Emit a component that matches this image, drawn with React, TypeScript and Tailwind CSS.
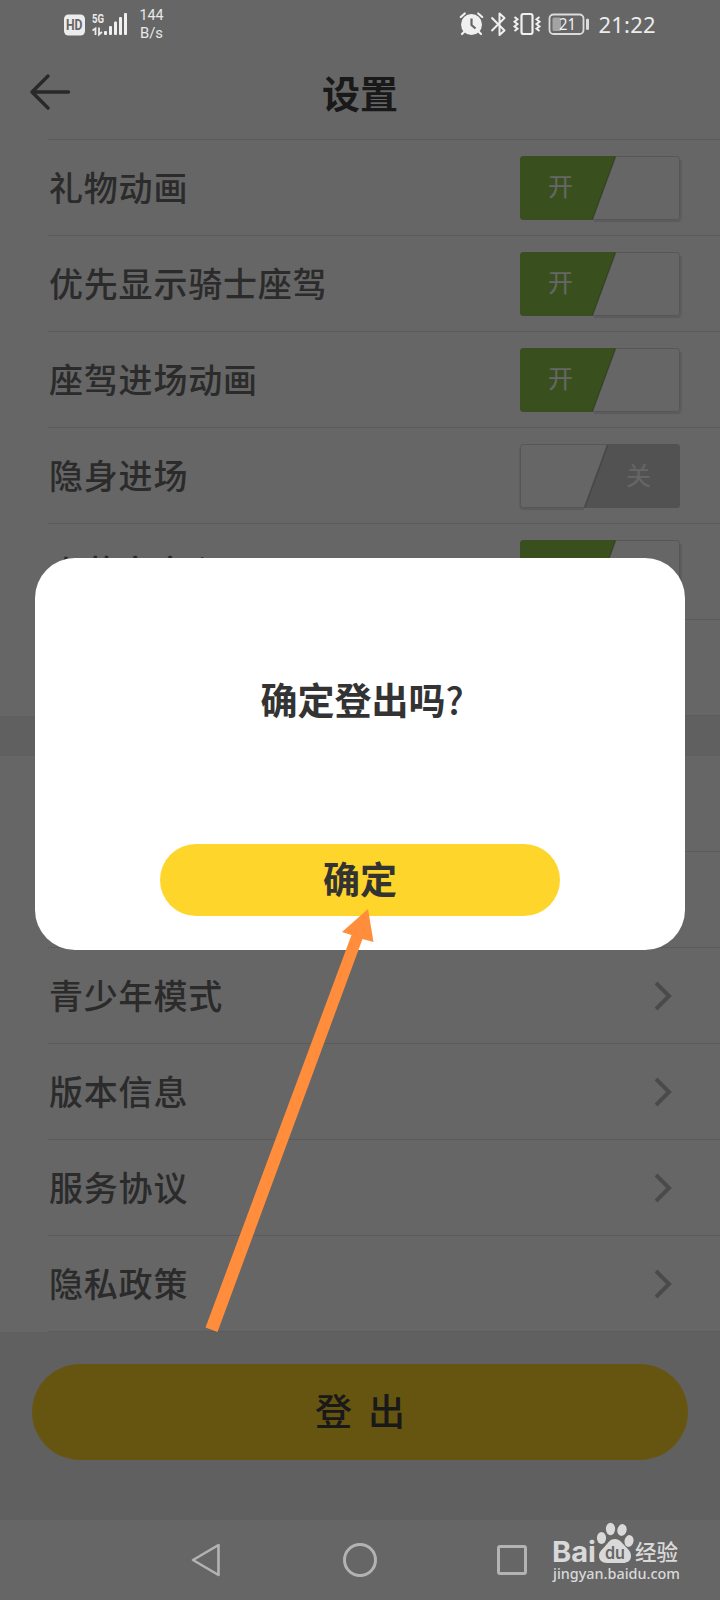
import React, { useState } from 'react';

interface ToggleItem {
  label: string;
  on: boolean;
}

const toggleItems: ToggleItem[] = [
  { label: '礼物动画', on: true },
  { label: '优先显示骑士座驾', on: true },
  { label: '座驾进场动画', on: true },
  { label: '隐身进场', on: false },
  { label: '火花文字心', on: true },
];

const linkItems = ['青少年模式', '版本信息', '服务协议', '隐私政策'];

function StatusBar() {
  return (
    <div className="relative z-20 h-12">
      <svg width="720" height="48" viewBox="0 0 720 48" fill="none" className="block">
        {/* HD + signal */}
        <rect x="64" y="14.5" width="21" height="21" rx="4.5" fill="#ececec" />
        <text x="66" y="30" textLength="16.5" lengthAdjust="spacingAndGlyphs" fontSize="14" fontWeight="700" fill="#666" fontFamily="Roboto, sans-serif">HD</text>
        <text x="92" y="23" textLength="12" lengthAdjust="spacingAndGlyphs" fontSize="13" fontWeight="700" fill="#ececec" fontFamily="Roboto, sans-serif">5G</text>
        <path d="M92.500 30.500l3-2V35M99 27.500V34.500l3-2.500" stroke="#ececec" strokeWidth="1.800" />
        <g fill="#f0f0f0">
          <rect x="104" y="31" width="3" height="4" rx="1" />
          <rect x="109" y="26" width="3" height="9" rx="1" />
          <rect x="114" y="21.500" width="3" height="13.500" rx="1" />
          <rect x="119" y="17" width="3" height="18" rx="1" />
          <rect x="124" y="13" width="3" height="22" rx="1" />
        </g>
        <text x="139.500" y="20" textLength="24" lengthAdjust="spacingAndGlyphs" fontSize="15" fill="#e8e8e8" fontFamily="Roboto, sans-serif">144</text>
        <text x="140" y="38" textLength="23" lengthAdjust="spacingAndGlyphs" fontSize="15" fill="#e8e8e8" fontFamily="Roboto, sans-serif">B/s</text>

        {/* alarm */}
        <circle cx="471.500" cy="24.500" r="10.500" fill="#f0f0f0" />
        <path d="M471.500 18.500v6.500l4 3.500" stroke="#666" strokeWidth="2.200" />
        <path d="M460.800 17l4-3.500M482.200 17l-4-3.500M464.500 31.500l-2.500 2.500M478.500 31.500l2.500 2.500" stroke="#f0f0f0" strokeWidth="2.200" strokeLinecap="round" />
        {/* bluetooth */}
        <path d="M491.500 17.500L504.500 30.500L499.500 35V13.500L504.500 18L491.500 31" stroke="#f0f0f0" strokeWidth="2" strokeLinejoin="round" />
        {/* vibrate */}
        <rect x="521.500" y="14" width="11" height="20" rx="2" stroke="#f0f0f0" strokeWidth="2.200" />
        <path d="M514.500 17l3 2.300-3 2.400 3 2.300-3 2.400 3 2.300-3 2.300M539.500 17l-3 2.300 3 2.400-3 2.300 3 2.400-3 2.300 3 2.300" stroke="#f0f0f0" strokeWidth="2" />
        {/* battery */}
        <rect x="549.500" y="14.500" width="34" height="19.500" rx="4" stroke="#dcdcdc" strokeWidth="1.800" />
        <rect x="552.500" y="17.500" width="8.500" height="13.500" rx="1.500" fill="#a3a3a3" />
        <rect x="586" y="18.500" width="3" height="11.500" rx="1.500" fill="#dcdcdc" />
        <text x="559" y="30" textLength="17" lengthAdjust="spacingAndGlyphs" fontSize="16" fill="#f0f0f0" fontFamily="'Noto Sans', sans-serif">21</text>
        <text x="598.500" y="32.500" textLength="57" fontSize="22" fill="#ececec" fontFamily="'Noto Sans', sans-serif">21:22</text>
      </svg>
    </div>
  );
}

function Switch({ on }: { on: boolean }) {
  return (
    <svg width="168" height="72" viewBox="-4 -4 168 72" className="-mr-1 block">
      {on ? (
        <>
          <path d="M74 65H157.500a3 3 0 0 0 3-3V4" stroke="#000" strokeOpacity=".1" strokeWidth="2.500" fill="none" />
          <rect x=".5" y=".5" width="159" height="63" rx="3" fill="#fff" stroke="#d8d8d8" />
          <path d="M3.500 0H96L72.500 64H3.500A3.500 3.500 0 0 1 0 60.500V3.500A3.500 3.500 0 0 1 3.500 0z" fill="#8fc74b" />
          <path d="M95.500 1L72.500 63.500" stroke="#000" strokeOpacity=".18" strokeWidth="1.500" />
          <text x="28" y="40" fontSize="25" fill="#fff" fontFamily="'Noto Sans CJK SC', sans-serif">开</text>
        </>
      ) : (
        <>
          <path d="M.5 4v58a3 3 0 0 0 3 3H64" stroke="#000" strokeOpacity=".1" strokeWidth="2.500" fill="none" />
          <rect x=".5" y=".5" width="159" height="63" rx="3" fill="#fff" stroke="#d8d8d8" />
          <path d="M87.500 0H156.500a3.500 3.500 0 0 1 3.500 3.500V60.500a3.500 3.500 0 0 1-3.500 3.500H64z" fill="#cdcdcd" />
          <path d="M87.500 1L64.500 63.500" stroke="#000" strokeOpacity=".15" strokeWidth="2" />
          <text x="106" y="41" fontSize="25" fill="#fff" fontFamily="'Noto Sans CJK SC', sans-serif">关</text>
        </>
      )}
    </svg>
  );
}

function Row({ label, children }: { label?: string; children?: React.ReactNode }) {
  return (
    <div className="ml-12 flex h-24 items-center justify-between border-b border-[#e6e6e6] pr-10">
      <span className="pb-0.5 pl-px text-[34px] font-medium tracking-[0.8px] text-[#6b6b6b]">{label}</span>
      {children}
    </div>
  );
}

function Chevron() {
  return (
    <svg width="18" height="30" viewBox="0 0 18 30" fill="none" className="mr-2 block">
      <path d="M2 2L15 15L2 28" stroke="#bababa" strokeWidth="4" />
    </svg>
  );
}

function NavBar() {
  return (
    <div className="relative z-20 flex h-20 items-center pl-[190px]">
      <svg width="30" height="36" viewBox="0 0 30 36" fill="none" className="block">
        <path d="M28.500 3V33L3 18z" stroke="#b3b3b3" strokeWidth="2.600" strokeLinejoin="round" />
      </svg>
      <div className="ml-[123px] h-[34px] w-[34px] rounded-full border-[3px] border-[#b3b3b3]" />
      <div className="ml-[120px] h-[30px] w-[30px] rounded-[3px] border-[3px] border-[#b3b3b3]" />
    </div>
  );
}

function Watermark() {
  return (
    <svg width="136" height="68" viewBox="0 0 136 68" className="absolute bottom-3 left-[549px] z-40 overflow-visible">
      <g fill="#d9d9d9">
        <text x="3" y="42" textLength="44" lengthAdjust="spacingAndGlyphs" fontSize="28" fontWeight="700" fontFamily="Inter, sans-serif">Bai</text>
        <ellipse cx="52.500" cy="18" rx="4.600" ry="6" />
        <ellipse cx="61.500" cy="9" rx="4.600" ry="6.200" />
        <ellipse cx="73" cy="10" rx="4.600" ry="6" transform="rotate(12 73 10)" />
        <ellipse cx="80" cy="21" rx="4.500" ry="6" transform="rotate(12 80 21)" />
        <path d="M66 19c5 0 7 4 10 7 4 4 6 6 6 10 0 5-4 7-8 7H58c-5 0-8-3-8-7 0-5 4-7 7-11 3-3 4-6 9-6z" />
        <text x="86" y="40" textLength="43" fontSize="21.500" fontWeight="500" fontFamily="'Noto Sans CJK SC', sans-serif">经验</text>
        <text x="4" y="59" textLength="127" lengthAdjust="spacingAndGlyphs" fontSize="15" fontWeight="500" fontFamily="'Noto Sans', sans-serif">jingyan.baidu.com</text>
      </g>
      <text x="56" y="39" textLength="20" lengthAdjust="spacingAndGlyphs" fontSize="17" fontWeight="600" fill="#666" fontFamily="Inter, sans-serif">du</text>
    </svg>
  );
}

export default function App() {
  const [dialogOpen, setDialogOpen] = useState(true);

  return (
    <div className="relative h-[1600px] w-[720px] overflow-hidden bg-white font-['Noto_Sans_CJK_SC',sans-serif]">
      <StatusBar />

      <header className="flex h-[92px] items-center pb-1">
        <svg width="44" height="38" viewBox="0 0 44 38" fill="none" className="ml-7 block">
          <path d="M20 3L4 19L20 35M4 19H40.500" stroke="#666" strokeWidth="3.400" strokeLinecap="round" strokeLinejoin="round" />
        </svg>
        <h1 className="mr-[72px] flex-1 text-center text-[38px] font-bold leading-none text-[#404040]">设置</h1>
      </header>

      <section>
        <div className="-mt-px ml-12 border-t border-[#e6e6e6]" />
        {toggleItems.map((item) => (
          <Row key={item.label} label={item.label}>
            <Switch on={item.on} />
          </Row>
        ))}
        <Row />
      </section>

      <div className="h-10 bg-[#f0f0f0]" />

      <section>
        <Row />
        <Row />
        {linkItems.map((label) => (
          <Row key={label} label={label}>
            <Chevron />
          </Row>
        ))}
      </section>

      <div className="h-[188px] bg-[#f0f0f0] px-8 pt-8">
        <button
          onClick={() => setDialogOpen(true)}
          className="flex h-24 w-full items-center justify-center rounded-full bg-[#ffd428] pb-1 text-[37px] font-medium leading-none text-[#404040]"
        >
          <span className="mr-4">登</span>
          <span>出</span>
        </button>
      </div>

      <NavBar />

      {dialogOpen && (
        <>
          <div className="absolute inset-0 z-10 bg-black/60" />
          <div className="absolute left-[35px] top-[558px] z-30 flex h-[392px] w-[650px] flex-col items-center rounded-[40px] bg-white pt-[119px]">
            <p className="pl-1 text-[37px] font-bold leading-[44px] text-[#333]">
              确定登出吗<span className="font-medium">?</span>
            </p>
            <button
              onClick={() => setDialogOpen(false)}
              className="mt-[123px] flex h-[72px] w-[400px] items-center justify-center rounded-full bg-[#fed52a] pb-1 text-[37px] font-bold leading-none text-[#333]"
            >
              确定
            </button>
          </div>
        </>
      )}

      {/* pointer to the confirm button */}
      <svg width="170" height="424" viewBox="204 909 170 424" className="absolute left-[204px] top-[909px] z-40">
        <polygon points="368,909 342,932 351.500,935 205.500,1327.500 217.500,1332 362.500,939 373.500,942" fill="#ff8d3b" />
      </svg>

      <Watermark />
    </div>
  );
}
